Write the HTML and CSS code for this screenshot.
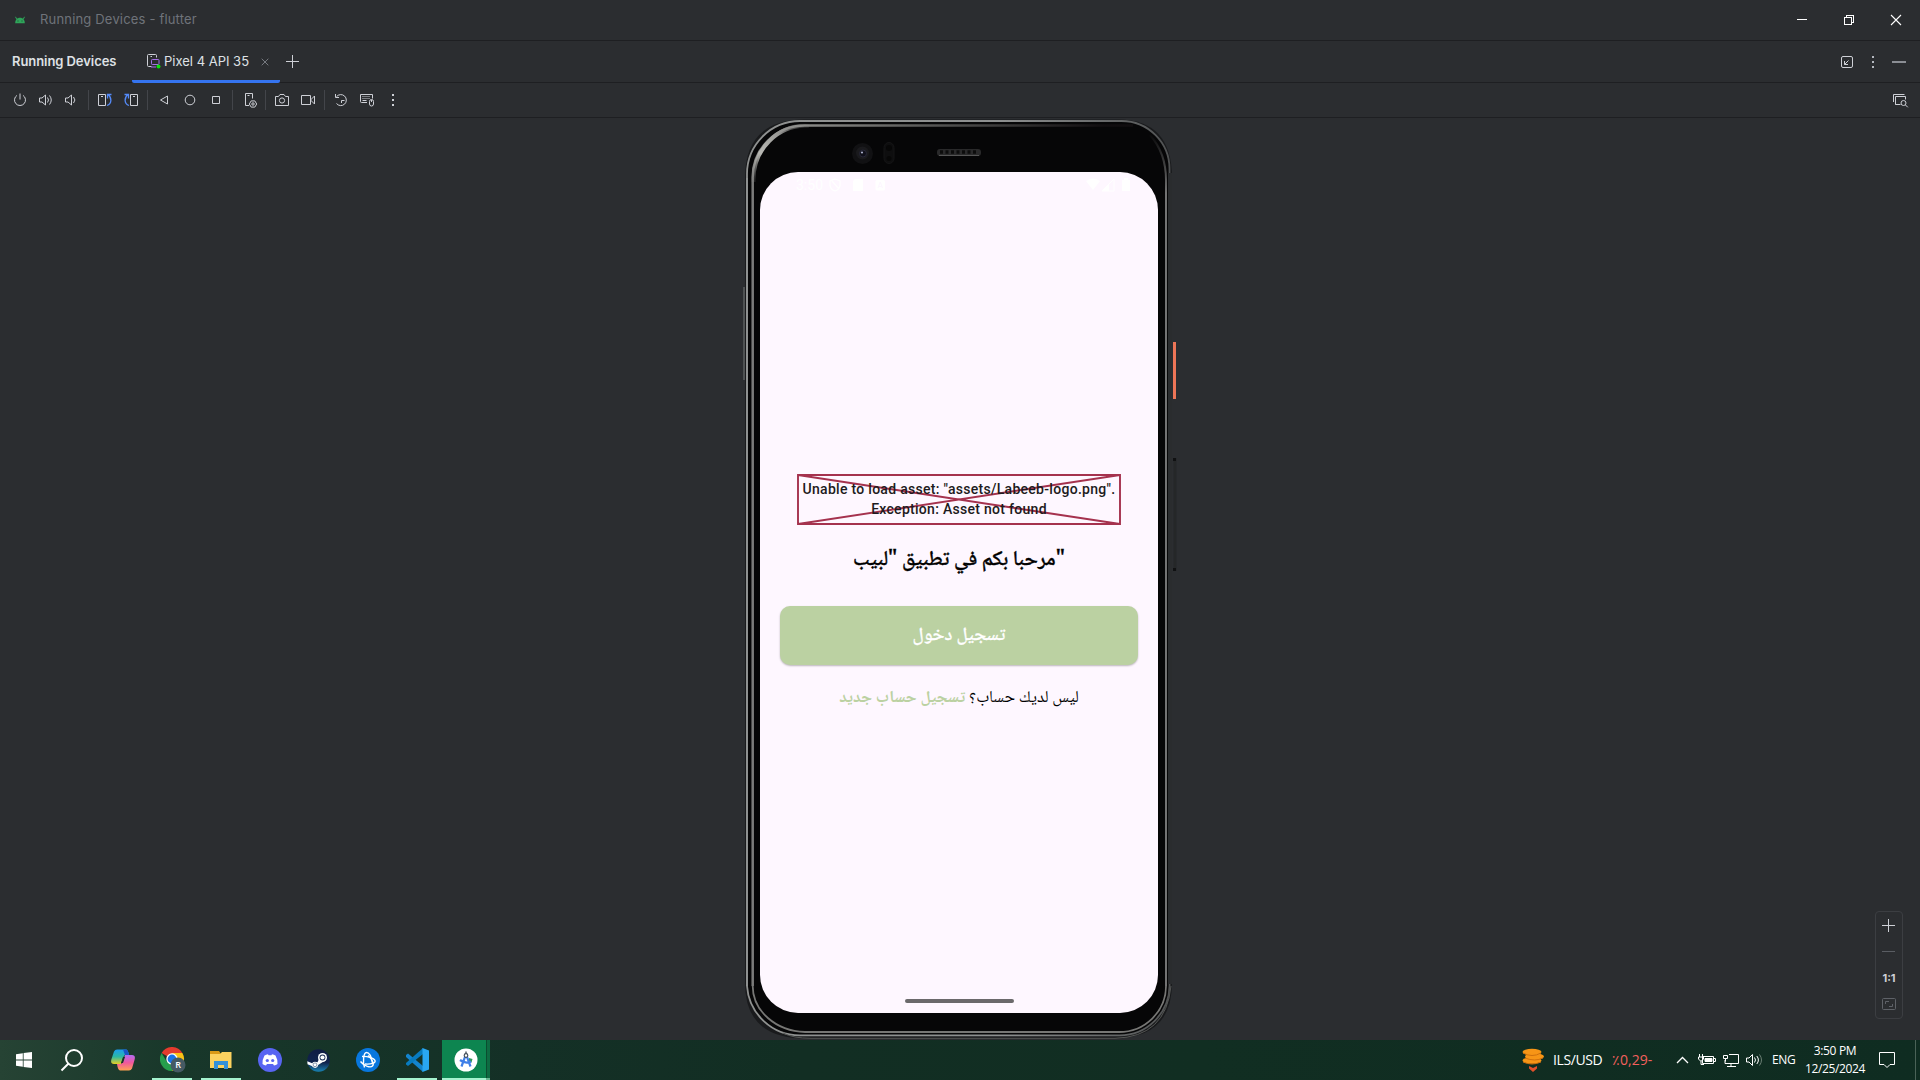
FILE: index.html
```html
<!DOCTYPE html>
<html lang="en">
<head>
<meta charset="utf-8">
<title>Running Devices - flutter</title>
<link rel="stylesheet" href="styles.css">
</head>
<body>
<header class="titlebar">
  <svg class="droid" width="12" height="8" viewBox="0 0 12 8"><path d="M1.200 7.200C1.200 4 3 1.800 6 1.800s4.800 2.200 4.800 5.400z" fill="#2fa55a"/><path d="M2.800 3.400L1.500.8M9.200 3.400L10.500.8" stroke="#2fa55a" stroke-width="1"/><path d="M3.500 4.500h1v1h-1zM7.500 4.500h1v1h-1z" fill="#1c4a32"/></svg>
  <span class="window-title">Running Devices - flutter</span>
  <svg class="win-controls" width="108" height="14" viewBox="0 0 108 14" fill="none" stroke="#fff" shape-rendering="crispEdges"><path d="M1 6.500h10"/><path d="M48.500 4.500h7v7h-7zM50.500 4.500v-2h7v7h-2"/><path d="M95 2l10 10M105 2L95 12" shape-rendering="auto" stroke-width="1.100"/></svg>
</header>
<nav class="tabs">
  <span class="tool-name">Running Devices</span>
  <div class="tab">
    <svg width="15" height="16" viewBox="0 0 15 16" fill="none"><path d="M5.500 13.500h-3a1 1 0 0 1-1-1v-10a1 1 0 0 1 1-1h7a1 1 0 0 1 1 1v2M4.500 3.500h1.500" stroke="#ced0d6"/><rect x="5.500" y="6.500" width="7.500" height="5" rx=".8" stroke="#a571e6"/><path d="M5 14h5" stroke="#a571e6"/><circle cx="12.500" cy="13.500" r="2" fill="#0be30b"/></svg>
    <span>Pixel 4 API 35</span>
    <svg class="close" width="8" height="8" viewBox="0 0 8 8"><path d="M.7.7l6.600 6.600M7.300.7L.7 7.300" stroke="#777a80"/></svg>
  </div>
  <svg class="add" width="14" height="14" viewBox="0 0 14 14"><path d="M6.500 0v13M0 6.500h13" stroke="#ced0d6"/></svg>
  <svg class="tab-actions" width="68" height="16" viewBox="0 0 68 16" fill="none"><rect x="1.500" y="2.500" width="11" height="11" rx="1.500" stroke="#ced0d6"/><path d="M8.500 6.500l-4 4M4.500 7v3.500H8" stroke="#ced0d6"/><path d="M32 2h2v2h-2zM32 7h2v2h-2zM32 12h2v2h-2z" fill="#b4b8bf"/><path d="M52 8h14" stroke="#8b8e94" stroke-width="2"/></svg>
</nav>
<div class="toolbar">
  <svg class="tool" viewBox="0 0 26 16"><path d="M10 3.400a5.500 5.500 0 1 0 6 0M13 1.500v6"/></svg>
  <svg class="tool" viewBox="0 0 26 16"><path d="M6.500 6v4H9l3.500 3V3L9 6zM14.500 5.500q2 2.500 0 5M16.500 3.500q3.500 4.500 0 9"/></svg>
  <svg class="tool" viewBox="0 0 26 16"><path d="M6.500 6v4H9l3.500 3V3L9 6zM14.500 5q2.800 3 0 6"/></svg>
  <i class="sep"></i>
  <svg class="tool" viewBox="0 0 26 16"><path d="M6.500 2.500h7v11h-7zM9 4.500h2"/><path class="blue" d="M15 13.500c5-1.500 5-8 1-11M19.500 2.500h-4v4"/></svg>
  <svg class="tool" viewBox="0 0 26 16"><path d="M12.500 2.500h7v11h-7zM15 4.500h2"/><path class="blue" d="M11 13.500C6 12 6 5.500 10 2.500M6.500 2.500h4v4"/></svg>
  <i class="sep"></i>
  <svg class="tool" viewBox="0 0 26 16"><path d="M16.500 4v8L9.500 8z"/></svg>
  <svg class="tool" viewBox="0 0 26 16"><circle cx="13" cy="8" r="4.800"/></svg>
  <svg class="tool" viewBox="0 0 26 16"><path d="M9.500 4.500h7v7h-7z"/></svg>
  <i class="sep"></i>
  <svg class="tool" viewBox="0 0 26 16"><path d="M13 13.500H9.500v-12h7v5M11.500 3.500h2"/><path d="M15.200 8.900h3.600l1.900 3.100-1.900 3.100h-3.600L13.300 12z"/><circle cx="17" cy="12" r="1.200"/></svg>
  <i class="sep"></i>
  <svg class="tool" viewBox="0 0 26 16"><path d="M6.500 4.500h3l1.500-2h4l1.500 2h3v9h-13z"/><circle cx="13" cy="8.500" r="2.600"/></svg>
  <svg class="tool" viewBox="0 0 26 16"><path d="M6.500 3.500h9v9h-9zM15.500 8l4-4v8z"/></svg>
  <i class="sep"></i>
  <svg class="tool" viewBox="0 0 26 16"><path d="M8.500 4.700A5.500 5.500 0 1 1 8.500 11.500M7.500 2v3.500H11M13.500 11V8.500H16.500"/></svg>
  <svg class="tool" viewBox="0 0 26 16"><path d="M13 10.500H7.500a1 1 0 0 1-1-1v-7h12v4M8.500 8.500h4"/><path d="M8.500 4.500h8M8.500 6.500h8" stroke-dasharray="1 1"/><rect x="15.500" y="7.500" width="4" height="6.500" rx="2"/><path d="M17.500 8v2"/></svg>
  <svg class="tool" viewBox="0 0 26 16"><path class="dots" d="M12 2h2v2h-2zM12 7h2v2h-2zM12 12h2v2h-2z"/></svg>
  <svg class="tool inspect" viewBox="0 0 26 16"><path d="M6.500 10V2.500h11M9 12.500h-.5v-8h10v3M8.500 12.500h5"/><circle cx="16.500" cy="11" r="2.500"/><path d="M18.500 13l2.300 2.300"/></svg>
</div>
<main class="stage">
  <div class="phone">
    <svg class="frame" width="434" height="922" viewBox="0 0 434 922" fill="none">
      <defs>
        <linearGradient id="rim" x1="0" y1="0" x2="1" y2="0"><stop offset="0" stop-color="#8f9190"/><stop offset=".6" stop-color="#8d8f8f"/><stop offset="1" stop-color="#505253"/></linearGradient>
        <linearGradient id="shine" gradientUnits="userSpaceOnUse" x1="8" y1="0" x2="400" y2="0"><stop offset="0" stop-color="#7b7b7a"/><stop offset=".12" stop-color="#8d8d8a"/><stop offset=".5" stop-color="#50504f"/><stop offset=".9" stop-color="#100d0f"/></linearGradient>
        <linearGradient id="glint" gradientUnits="userSpaceOnUse" x1="10" y1="70" x2="70" y2="8"><stop offset="0" stop-color="#8a8a88" stop-opacity="0"/><stop offset=".35" stop-color="#b9b9b4"/><stop offset=".65" stop-color="#9b9b98"/><stop offset="1" stop-color="#8a8a88" stop-opacity="0"/></linearGradient>
        <linearGradient id="side" gradientUnits="userSpaceOnUse" x1="0" y1="15" x2="0" y2="75"><stop offset="0" stop-color="#737373" stop-opacity="0"/><stop offset="1" stop-color="#737373"/></linearGradient>
      </defs>
      <path d="M1 169v93" stroke="#5d5f5f" stroke-width="1.500"/>
      <path d="M2 60Q2 1.500 62 1.500H375Q429 1.500 429 60V865Q429 920.500 370 920.500H62Q2 920.500 2 865z" fill="#191a1c"/>
      <path d="M4 868V56A53 53 0 0 1 57 3H378A48 48 0 0 1 426.500 52V868A50 50 0 0 1 376 917.300H57A53 53 0 0 1 4 868z" fill="#060607" stroke="url(#rim)" stroke-width="1.800"/>
      <path d="M427 55V866" stroke="#2a2c2e" stroke-width="4"/>
      <path d="M9.700 868V60A52 52 0 0 1 62 7.500H390" stroke="url(#shine)" stroke-width="2.500"/>
      <path d="M10.500 64A52 54 0 0 1 66 8" stroke="url(#glint)" stroke-width="4"/>
      <path d="M9.700 868A54 46 0 0 0 62 914H376A47 46 0 0 0 423 868" stroke="#777775" stroke-width="1.800"/>
      <path d="M40 915Q50 920.300 68 920.300H372Q423 919 428 868" stroke="#555755"/>
      <path d="M423 868V62Q423 35 407 17" stroke="url(#side)" stroke-width="2"/>
      <path d="M4 60V868" stroke="#929595" stroke-width="1.500"/>
      <circle cx="119.500" cy="35.500" r="10.500" fill="#111113"/><circle cx="119.500" cy="35" r="6.500" fill="#1a1a1d"/><circle cx="120" cy="35.500" r="3.500" fill="#10101a" stroke="#262636"/><circle cx="119" cy="34.500" r="1.100" fill="#a9adc9"/>
      <rect x="141" y="24.500" width="10" height="21" rx="5" fill="#0e0e0f" stroke="#151516"/><circle cx="146" cy="30" r="3" fill="#070707"/><circle cx="146" cy="40.500" r="2.500" fill="#070707"/>
      <rect x="194" y="31" width="44" height="7" rx="3" fill="#29292a"/><path d="M197 34h38" stroke="#0c0c0c" stroke-width="3.500" stroke-dasharray="3 2.500"/><path d="M196 37.500h40" stroke="#555"/>
      <path d="M431.500 224v57" stroke="#ed7557" stroke-width="3"/>
      <path d="M432 340v113" stroke="#252728" stroke-width="3"/><path d="M431.500 340v3M431.500 450v3" stroke="#101112" stroke-width="3"/>
    </svg>
    <div class="screen">
      <div class="statusbar">
        <span>3:50</span>
        <svg width="60" height="14" viewBox="0 0 60 14"><path d="M6 1l5 2v4c0 3-2 5-5 6-3-1-5-3-5-6V3zM3 3l7 8" fill="none" stroke="#fff" stroke-width="1.300"/><path d="M26 1h8v12H24V3z" fill="#fff"/><rect x="46.500" y="2" width="9.500" height="10.500" rx="1.500" fill="#fff"/><path d="M49 10l2.200-6 2.300 6M50 8.500h2.500" stroke="#fdf7ff" fill="none"/></svg>
        <svg class="signals" width="46" height="14" viewBox="0 0 46 14"><path d="M0 3q7-5 14 0L7 12z" fill="#fff"/><path d="M16 13L28 1v12z" fill="none" stroke="#fff"/><path d="M16 13l7-7v7z" fill="#fff"/><path d="M36 2h2V0h4v2h2v11h-8z" fill="#fff"/></svg>
      </div>
      <div class="asset-error">
        <svg class="cross" width="324" height="51" viewBox="0 0 324 51"><path d="M1 1h322v49H1zM1 1l322 49M323 1L1 50" fill="none" stroke="#a5324e" stroke-width="1.900"/></svg>
        <p>Unable to load asset: "assets/Labeeb-logo.png".<br>Exception: Asset not found</p>
      </div>
      <h1 class="welcome" dir="rtl" lang="ar">"مرحبا بكم في تطبيق "لبيب</h1>
      <div class="login" dir="rtl" lang="ar">تسجيل دخول</div>
      <p class="signup" dir="rtl" lang="ar">ليس لديك حساب؟ <b>تسجيل حساب جديد</b></p>
      <i class="homebar"></i>
    </div>
  </div>
  <aside class="zoom">
    <svg width="14" height="14" viewBox="0 0 14 14"><path d="M6.500 0v13M0 6.500h13" stroke="#ced0d6"/></svg>
    <svg width="14" height="14" viewBox="0 0 14 14"><path d="M0 6.500h13" stroke="#5a5d63"/></svg>
    <span>1:1</span>
    <svg width="14" height="14" viewBox="0 0 14 14" fill="none" stroke="#5f6268"><rect x=".5" y="1.500" width="13" height="11" rx="1"/><path d="M3.500 7V4.500H7M10.500 7v2.500H7"/></svg>
  </aside>
</main>
<footer class="taskbar">
  <div class="task start"><svg width="16" height="16" viewBox="0 0 16 16" fill="#fff"><path d="M0 2.200l6.800-1v6.400H0zM7.600 1.100L16 0v7.600H7.600zM0 8.400h6.800v6.400l-6.800-1zM7.600 8.400H16V16l-8.400-1.100z"/></svg></div>
  <div class="task"><svg width="24" height="24" viewBox="0 0 24 24" fill="none" stroke="#fff" stroke-width="2"><circle cx="14" cy="10" r="8"/><path d="M8.500 15.500L1.500 22.500"/></svg></div>
  <div class="task copilot"><svg width="24" height="22" viewBox="0 0 24 22"><defs><linearGradient id="ca" x1="0" y1="0" x2="0" y2="1"><stop offset="0" stop-color="#1b9df0"/><stop offset=".5" stop-color="#2cb9a3"/><stop offset="1" stop-color="#e8cf24"/></linearGradient><linearGradient id="cb" x1="0" y1="0" x2="0" y2="1"><stop offset="0" stop-color="#b26bf2"/><stop offset=".5" stop-color="#f0589c"/><stop offset="1" stop-color="#ffa252"/></linearGradient></defs><path d="M6 .5h9q2 0 3 5.500h-4q-1 0-2 3l-2 6H3q-4 0-2.500-5L3 2.500q1-2 3-2z" fill="url(#ca)"/><path d="M12 .5h3q2 0 3 5.500h-4z" fill="#1a55c8"/><path d="M18 21.500H9q-2 0-3-6.500h4q1 0 2-3l2-6h7q4 0 2.500 5L21 19.500q-1 2-3 2z" fill="url(#cb)"/><path d="M12 8h2l-2 6h-2z" fill="#173528"/></svg></div>
  <div class="task chrome open"><svg width="26" height="26" viewBox="0 0 26 26"><path d="M1.600 6A12 12 0 0 1 22.400 6L12 12z" fill="#e33b2e"/><path d="M12 6h10.400A12 12 0 0 1 12 24l5-9z" fill="#fbc116"/><path d="M1.600 6A12 12 0 0 0 12 24l4-9H7z" fill="#269e4c"/><circle cx="12" cy="12" r="5.700" fill="#fff"/><circle cx="12" cy="12" r="4.400" fill="#1a73e8"/><circle cx="18" cy="18" r="7.500" fill="#455a64"/><text x="18" y="21.200" text-anchor="middle" class="avatar">R</text></svg></div>
  <div class="task open"><svg width="22" height="20" viewBox="0 0 22 20"><path d="M0 1h9l2 3H0z" fill="#d99a16"/><path d="M0 4h10l2-2h9.500v16H0z" fill="#fbd25f"/><path d="M4 11h14v8h-4v-4H8v4H4z" fill="#3491d8"/></svg></div>
  <div class="task"><svg width="24" height="24" viewBox="0 0 24 24"><circle cx="12" cy="12" r="12" fill="#5865f2"/><path d="M6.500 7.500Q8 6.500 10 6.300l.5 1h3l.5-1q2 .2 3.500 1.200 2.300 4 2 8.500-1.500 1.200-3.500 1.500l-1-1.500H9l-1 1.500Q6 17.200 4.500 16q-.3-4.500 2-8.500z" fill="#fff"/><circle cx="9.300" cy="12.500" r="1.600" fill="#5865f2"/><circle cx="14.700" cy="12.500" r="1.600" fill="#5865f2"/></svg></div>
  <div class="task steam"><svg width="23" height="23" viewBox="0 0 23 23"><defs><linearGradient id="st" x1="0" y1="0" x2="0" y2="1"><stop offset="0" stop-color="#101c43"/><stop offset=".6" stop-color="#10244e"/><stop offset="1" stop-color="#1983b4"/></linearGradient></defs><circle cx="11.500" cy="11.500" r="11.300" fill="url(#st)"/><path d="M.3 12.300l6 2.400 4.200-1.400 2-4.500 4.500 3.500-5.500 3.500-3 3-3-1.500-5-2z" fill="#fff"/><circle cx="15.500" cy="8.500" r="4.500" fill="#fff"/><circle cx="15.500" cy="8.500" r="2.900" fill="#10244e"/><circle cx="15.500" cy="8.500" r="2.100" fill="#fff"/><circle cx="8" cy="15.800" r="3" fill="#fff"/><circle cx="8" cy="15.800" r="1.900" fill="none" stroke="#3b5478" stroke-width=".6"/></svg></div>
  <div class="task"><svg width="24" height="24" viewBox="0 0 24 24"><circle cx="12" cy="12" r="12" fill="#0877de"/><g fill="none" stroke="#fff" stroke-width="1.400"><path d="M8.500 19.500C6.500 14 7.500 4.500 10.500 4.500s5 5 6 10.500"/><path d="M6 8.500c5-.5 12 1.500 13 4s-4 4-10 3.500"/><path d="M4.500 13.500c4 5 10 6.500 12 4.500s-.5-7-4.500-10.500"/></g></svg></div>
  <div class="task open"><svg width="24" height="24" viewBox="0 0 24 24"><path d="M1 7l2-1.500L18 18v6L1 9z" fill="#1484cd"/><path d="M1 16.500L3 18 18 6V0L1 15z" fill="#087bbf"/><path d="M17.500 0L24 2.500v19L17.500 24z" fill="#29a7f3"/></svg></div>
  <div class="task active"><svg width="24" height="24" viewBox="0 0 24 24"><circle cx="12" cy="12" r="11.500" fill="#fff"/><path d="M15 10l3.500 1-1 3.500-3-1z" fill="#30985b"/><path d="M7.500 18.500l4-11h1l4 11M6 12q6 4.500 11 1.500" fill="none" stroke="#3f7fe8" stroke-width="2.200"/><circle cx="12" cy="7.500" r="1.800" fill="#fff" stroke="#45505a" stroke-width="1.200"/><path d="M11.300 3.500h1.400v2.500h-1.400z" fill="#45505a"/></svg></div>
  <div class="tray">
    <svg class="coins" width="23" height="24" viewBox="0 0 23 24"><g fill="#f79516"><ellipse cx="10" cy="4" rx="9.500" ry="3.300"/><ellipse cx="12.500" cy="8.500" rx="9.500" ry="3.300"/><ellipse cx="10" cy="12.500" rx="9.500" ry="3.300"/></g><path d="M1 5q9 5 18 0M3 10q10 4 18 0M1 14q9 4 18 0" stroke="#cf700d" fill="none"/><path d="M7 18l4 2 4-2v2.500L11 24l-4-3.500z" fill="#e1502a"/></svg>
    <span class="pair">ILS/USD</span><span class="rate">٪0,29-</span>
    <svg class="tray-icons" width="88" height="20" viewBox="0 0 88 20" fill="none" stroke="#fff"><path d="M1 13l5.500-5.500L12 13" stroke-width="1.300"/><path d="M26.500 6.500h11v7h-11zM38 8.500h1.500v3H38"/><path d="M29 8.500h7v3h-7z" fill="#fff"/><path d="M23.500 4v3M26.500 4v3M22.500 7h5v2l-2 2h-1l-2-2zM25 11v3.500h3"/><path d="M53 4.500h9.500v9H49V10M55 13.500v3M51 16.500h9M47.500 5.500h4v3h-4zM49.500 8.500v3"/><path d="M70.500 8h2.500l3.500-3.500v11L73 12h-2.500zM78.500 7.500q2 2.500 0 5M80.800 6q3.200 4 0 8"/><path d="M83.500 4.500q4 5.500 0 11" stroke="#6b7f74"/></svg>
    <span class="lang">ENG</span>
    <div class="clock"><span>3:50 PM</span><span>12/25/2024</span></div>
    <svg class="notes" width="17" height="18" viewBox="0 0 17 18" fill="none" stroke="#fff"><path d="M.5 1.500h15v12H11L8 16.500 5 13.500H.5z"/></svg>
  </div>
</footer>
</body>
</html>
```
FILE: styles.css
```css
* { box-sizing: border-box; }
body { margin: 0; width: 1920px; height: 1080px; overflow: hidden; display: flex; flex-direction: column; background: #2b2d30; color: #dfe1e5; font-family: Inter, "Liberation Sans", sans-serif; font-size: 13px; }
p, h1 { margin: 0; }
svg { display: block; flex: none; }

.titlebar { height: 41px; border-bottom: 1px solid #1e1f22; display: flex; align-items: center; padding: 0 16px 0 14px; }
.window-title { margin-left: 14px; padding-bottom: 2px; color: #6f737a; letter-spacing: .18px; }
.win-controls { margin-left: auto; }

.tabs { height: 42px; border-bottom: 1px solid #1e1f22; display: flex; align-items: center; padding: 0 12px; }
.tool-name { width: 120px; padding-bottom: 1px; font-weight: 600; font-size: 13px; letter-spacing: -.07px; }
.tab { width: 148px; height: 42px; padding: 0 11px 0 14px; display: flex; align-items: center; border-bottom: 3px solid #3574f0; border-radius: 0 0 2px 2px; }
.tab span { margin-left: 3px; padding-top: 2px; white-space: nowrap; }
.tab svg { margin-top: 2px; }
.tab .close { margin-left: auto; margin-top: 3px; }
.add { margin-left: 6px; }
.tab-actions { margin-left: auto; }

.toolbar { height: 35px; border-bottom: 1px solid #1e1f22; display: flex; align-items: center; padding: 0 7px; }
.tool { width: 26px; height: 16px; fill: none; stroke: #ced0d6; stroke-width: 1; }
.tool .blue { stroke: #548af7; stroke-width: 1.300; }
.tool .dots { fill: #ced0d6; stroke: none; }
.sep { width: 1px; height: 20px; margin: 0 3px; background: #43454a; }
.inspect { margin-left: auto; }

.stage { height: 922px; display: flex; padding-right: 17px; align-items: flex-end; }
.phone { position: relative; width: 434px; height: 922px; margin-left: 743px; padding: 54px 19px 27px 17px; }
.frame { position: absolute; left: 0; top: 0; overflow: visible; }
.screen { position: relative; width: 398px; height: 841px; border-radius: 38px; background: #fef7ff; display: flex; flex-direction: column; align-items: center; color: #000; }
.statusbar { width: 100%; height: 24px; padding: 2px 26px 0 36px; display: flex; align-items: center; color: #fff; font: 14px Roboto, sans-serif; }
.statusbar span { width: 33px; }
.signals { margin-left: auto; }
.asset-error { position: relative; width: 324px; height: 51px; margin-top: 278px; padding-top: 5px; text-align: center; color: #1d1b20; font: 500 14px/20px Roboto, sans-serif; letter-spacing: .29px; white-space: nowrap; }
.cross { position: absolute; left: 0; top: 0; }
.asset-error p { position: relative; }
.welcome { height: 40px; margin-top: 16px; font: 500 20.800px/40px "Noto Naskh Arabic", "Noto Sans Arabic", "DejaVu Sans", sans-serif; -webkit-text-stroke: .4px; white-space: nowrap; }
.login { width: 358px; height: 59px; margin-top: 25px; border-radius: 10px; background: #bbd1a2; box-shadow: 0 1px 2px #0004; color: #fff; text-align: center; font: 500 18.600px/60px "Noto Naskh Arabic", "Noto Sans Arabic", "DejaVu Sans", sans-serif; -webkit-text-stroke: .3px; }
.signup { height: 30px; margin-top: 18px; font: 16.800px/31px "Noto Naskh Arabic", "Noto Sans Arabic", "DejaVu Sans", sans-serif; white-space: nowrap; }
.signup b { color: #bbd1a2; }
.homebar { width: 109px; height: 4px; margin-top: auto; margin-bottom: 10px; border-radius: 2px; background: #6b696b; }

.zoom { width: 28px; height: 108px; margin-left: auto; margin-bottom: 21px; padding: 7px 0; border: 1px solid #3c3e42; border-radius: 4px; display: flex; flex-direction: column; align-items: center; justify-content: space-between; }
.zoom span { font-size: 11px; line-height: 14px; font-weight: 700; color: #ced0d6; }

.taskbar { height: 40px; display: flex; background: linear-gradient(90deg, #264334 0, #18372a 180px, #143026 520px, #122e23 800px, #112e22 1200px, #0f2c21 100%); color: #fff; font-family: "Open Sans", "Noto Sans", sans-serif; }
.task { width: 49px; height: 40px; padding-right: 1px; display: flex; align-items: center; justify-content: center; }
.start { width: 48px; padding: 0; }
.copilot { width: 51px; padding: 0 0 0 1px; }
.chrome { padding: 0 0 0 1px; }
.steam { padding-right: 3px; }
.open { background: linear-gradient(#a5f3cf, #a5f3cf) 4px 38px / 40px 2px no-repeat; }
.active { width: 48px; padding: 0; background: linear-gradient(#a5f3cf, #a5f3cf) 0 38px / 44px 2px no-repeat, linear-gradient(#69b591, #69b591) 44px 38px / 4px 2px no-repeat, linear-gradient(90deg, #0d8550 44px, #0b4d30 44px, #0b4d30 45px, #0e6b42 45px); }
.avatar { font: 600 9px "Open Sans", sans-serif; fill: #fff; }
.tray { margin-left: auto; width: 400px; display: flex; align-items: center; border-right: 1px solid #4a6257; margin-right: 4px; white-space: nowrap; }
.coins { margin-left: 6px; }
.pair { width: 59px; margin-left: 8px; padding-bottom: 2px; font-size: 14px; letter-spacing: -.4px; }
.rate { width: 40px; padding-bottom: 1px; font-size: 14px; letter-spacing: -.45px; color: #f4605d; }
.tray-icons { margin-left: 24px; }
.lang { width: 24px; margin-left: 8px; padding-bottom: 1px; font-size: 12px; letter-spacing: -.3px; }
.clock { width: 60px; margin-left: 9px; display: flex; flex-direction: column; align-items: center; font-size: 12px; line-height: 18px; letter-spacing: -.35px; }
.notes { margin-left: 14px; }
```
